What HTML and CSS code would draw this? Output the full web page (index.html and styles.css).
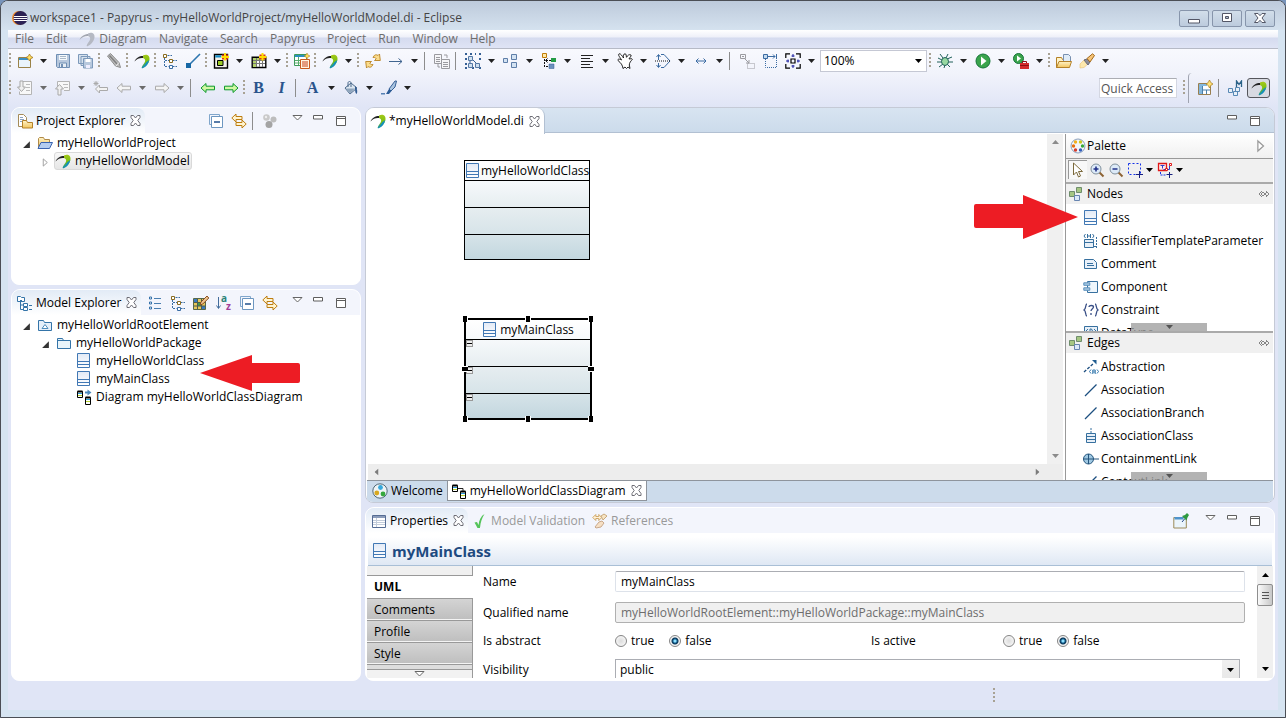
FILE: index.html
```html
<!DOCTYPE html>
<html lang="en">
<head>
<meta charset="utf-8">
<title>workspace1 - Papyrus - Eclipse</title>
<link rel="stylesheet" href="styles.css">
</head>
<body>
<svg class="defs" aria-hidden="true">
  <defs>
    <linearGradient id="g-cls" x1="0" y1="0" x2="0" y2="1"><stop offset="0" stop-color="#e2eaf6"/><stop offset="1" stop-color="#fff"/></linearGradient>
    <linearGradient id="g-pap" x1="0" y1="0" x2="0" y2="1"><stop offset="0" stop-color="#a4c81c"/><stop offset=".5" stop-color="#7cc010"/><stop offset="1" stop-color="#0a8ab8"/></linearGradient>
    <linearGradient id="g-fold" x1="0" y1="0" x2="0" y2="1"><stop offset="0" stop-color="#fff3c8"/><stop offset="1" stop-color="#f2c55e"/></linearGradient>
  </defs>
  <symbol id="arr" viewBox="0 0 7 4"><path d="M0 0h7L3.500 4z"/></symbol>
  <symbol id="eclipse" viewBox="0 0 16 16"><circle cx="7" cy="8" r="7" fill="#f08a2c"/><circle cx="8.500" cy="8" r="7" fill="#2c2255"/><path d="M2 6.500h13M1.700 8.500h13.600M2 10.500h13" stroke="#fff" stroke-width="1"/></symbol>
  <symbol id="papyrus" viewBox="0 0 16 16"><path d="M.5 8.500C2 4.500 6 2.500 10.500 3l-1 2C6 4.600 3 5.500 .5 8.500z" fill="#222"/><path d="M9 2.500c4-2 7 .5 6.500 4C15 10 12 14 8 15.500c-1-1 .5-3 2-5C11.500 8.500 12 6 9 5z" fill="url(#g-pap)"/><path d="M15.300 7c-1 4-3 6.500-6.500 8L12.500 9z" fill="#128fc0"/></symbol>
  <symbol id="papyrus-g" viewBox="0 0 16 16"><path d="M.5 9C2 5 6 2.500 11 3l-1 2C6 4.600 3 6 .5 9z" fill="#a2a6b0"/><path d="M9 2.500c4-2 7 .5 6.500 4C15 10 12 14 8 15.500c-1-1 .5-3 2-5C11.500 8.500 12 6 9 5z" fill="#b5b9c3"/></symbol>
  <symbol id="new" viewBox="0 0 16 16"><path d="M1.500 4.500h12v10h-12z" fill="#eaf4fb" stroke="#9a8248"/><path d="M2 5h9v2H2z" fill="#3b8fc6"/><path d="M12.500 1l1.200 2.300L16 4.500l-2.300 1.200L12.500 8l-1.200-2.300L9 4.500l2.300-1.200z" fill="#ffdf62" stroke="#a67a20" stroke-width=".8"/></symbol>
  <symbol id="save" viewBox="0 0 16 16"><path d="M1.500 1.500h13v13h-12l-1-1z" fill="#b7c8dd" stroke="#6f8fb4"/><path d="M4 2h8v5H4z" fill="#f5f9fc"/><path d="M5 3.500h6M5 5.500h6" stroke="#a9b8c8"/><path d="M4.500 10h7v4.500h-7z" fill="#e8eef5" stroke="#6f8fb4"/><path d="M6 11h2v3H6z" fill="#6f8fb4"/></symbol>
  <symbol id="saveall" viewBox="0 0 16 16"><g fill="#d6e1ed" stroke="#7c99ba"><path d="M.5 1.500h9v9h-9zM3 3.500h9v9H3z"/><path d="M5.500 5.500h9v9.500h-9z" fill="#b7c8dd"/></g><path d="M7.500 6h5v3h-5z" fill="#fff"/><path d="M8 12h4v3H8z" fill="#eef"/></symbol>
  <symbol id="pencil" viewBox="0 0 16 16"><path d="M1.500 3l3-2.500 8.500 9 1.500 5-5-1.500z" fill="#bcbcbc" stroke="#8c8c8c"/><path d="M3.500 2.500l7.500 8.500" stroke="#808080" stroke-width="1.500"/><path d="M10 13l3-3.500" stroke="#ececec"/></symbol>
  <symbol id="tree" viewBox="0 0 16 16"><path d="M2.500 5v8.500h4M3 7.500h4M10.500 7.500H15M10.500 13.500H15M5.500 2.500H10" fill="none" stroke="#3a6da4" stroke-dasharray="2 1"/><path d="M1.500 1.500h3v3h-3z" fill="#fff" stroke="#8a6c20"/><path d="M7.500 6.500h3v3h-3z" fill="#fff" stroke="#8a6c20"/><path d="M7.500 12.500h3v3h-3z" fill="#fff" stroke="#3a6da4"/></symbol>
  <symbol id="conn" viewBox="0 0 16 16"><path d="M5 11L15 1" stroke="#2e76b0" stroke-width="1.600"/><path d="M1 10h5v5H1z" fill="#1768a5"/></symbol>
  <symbol id="diag" viewBox="0 0 16 16"><path d="M1.500 1.500h13v13.500h-13z" fill="#f4f2ea" stroke="#000" stroke-width="1.400"/><path d="M2.200 2.200h6v2.300h-6z" fill="#168cc7"/><path d="M4.500 7.500h5.500v5H4.500z" fill="#9bcb25" stroke="#000"/><path d="M9 1.500h6v5H9z" fill="#d9371c"/><path d="M12 0v7.500M8.500 4h7.500" stroke="#ffdc00" stroke-width="2"/></symbol>
  <symbol id="table" viewBox="0 0 16 16"><path d="M1.200 4.200h13.600v10.300H1.200z" fill="#fff" stroke="#000" stroke-width="1.400"/><path d="M2 5h12v2H2zM2 7h3v7H2z" fill="#b3d16a"/><path d="M5.500 5v9M8.500 5v9M11.500 5v9M2 7.500h12M2 10.500h12" stroke="#777"/><path d="M8.500 1.500h6v5h-6z" fill="#d9371c"/><path d="M11.500 0v7.500M8 4h7.500" stroke="#ffdc00" stroke-width="2"/></symbol>
  <symbol id="table2" viewBox="0 0 16 16"><path d="M.5 1.500h12v11H.5z" fill="#fff" stroke="#3c9a5a"/><path d="M1 2h11v2H1z" fill="#2b8fc0"/><path d="M4.500 4v8M1 7.500h11M1 10h11" stroke="#5aac6c"/><path d="M6.500 6.500h9v9h-9z" fill="#fff6e4" stroke="#c85a1c"/><path d="M8 9h6M8 11h6M8 13h6" stroke="#c84018"/><path d="M13 0l1 2 2 1-2 1-1 2-1-2-2-1 2-1z" fill="#ffdc50" stroke="#a67a20" stroke-width=".5"/></symbol>
  <symbol id="sync" viewBox="0 0 16 16"><g fill="#fbdc8c" stroke="#b98220" stroke-width=".9" stroke-linejoin="round"><path d="M8 4.500C9 2 11 1 13 2.500L14.500 1l.8 6.500H9.500l1.700-1.700C10.500 4.500 9.500 4 8 4.500z"/><path d="M8 11.500C7 14 5 15 3 13.500L1.500 15l-.8-6.500h5.800l-1.700 1.700c.7 1.300 1.700 1.800 3.200 1.300z"/></g></symbol>
  <symbol id="rarr" viewBox="0 0 16 16"><path d="M1 8.500h13M10.500 5.500l3.500 3-3.500 3" fill="none" stroke="#41658f"/></symbol>
  <symbol id="copy" viewBox="0 0 16 16"><g fill="#f6f6f8" stroke="#9a9a9f"><path d="M.5 1.500h7v9h-7z"/><path d="M7.500 6.500h8v9h-8z"/><path d="M2 4.500h4M2 6.500h4M2 8.500h4M9 9.500h5M9 11.500h5M9 13.500h5M10 2h3v3M4 11v3h2" fill="none"/></g></symbol>
  <symbol id="arrange" viewBox="0 0 16 16"><path d="M0 0h2v2H0zM5 0h2v2H5zM10 0h1v2h-1zM14 0h2v2h-2zM0 5h2v2H0zM14 5h2v2h-2zM0 10h2v2H0zM14 14h2v2h-2zM0 14h2v2H0zM7 14h2v2H7z" fill="#345f94"/><path d="M6 5l6 6M5 6v5" stroke="#345f94"/><path d="M3.500 3.500h4v4h-4zM3.500 10.500h4v4h-4zM10.500 10.500h4v4h-4z" fill="#cfe0f0" stroke="#5578a4"/></symbol>
  <symbol id="align3" viewBox="0 0 16 16"><g fill="#d4e3f2" stroke="#5e7ea8"><path d="M.5 5.500h4v4h-4z"/><path d="M8.500 1.500h5v5h-5zM8.500 9.500h5v5h-5z"/></g></symbol>
  <symbol id="order" viewBox="0 0 16 16"><path d="M1.500.5h4v4h-4z" fill="#ffe9a8" stroke="#c07c08"/><path d="M3.500 6v9M5 7.500h5M5 13.500h3" stroke="#111" stroke-dasharray="2 1"/><path d="M6.500 5.500l-2 2 2 2" fill="none" stroke="#111"/><path d="M10 5h5v4h-5z" fill="#239c45"/><path d="M8 11h5v4.500H8z" fill="#6d91bd" stroke="#345f94" stroke-width=".5"/></symbol>
  <symbol id="lines" viewBox="0 0 16 16"><path d="M2 2.500h12M2 5.500h9M2 8.500h12M2 11.500h9M2 14.500h12" stroke="#222"/></symbol>
  <symbol id="ghost" viewBox="0 0 16 16"><path d="M6 15.500C5.500 12 4 10 1 7.500.5 6 2 5.500 4.500 7 3 4 .5 2 2 .8 4 .5 5 3 6.500 5 6.500 3 6 1 8 .8c1.500 0 1 2 1.500 3.500C10.500 2.500 12 1 14 2c1 1-2 3-2 4 1.500 0 3-1 3.300.5-1.300 1.500-3 3-3 5.500l.7 3.500-2-1.500-1.500 1.500L8 14z" fill="#fff" stroke="#111" stroke-width=".9"/></symbol>
  <symbol id="flip" viewBox="0 0 16 16"><path d="M3.500 2v5M1.500 4l2-2.500 2 2.500M3.500 10v4M1.500 12l2 2.500 2-2.500M6 1.500h3L15 8l-6 6.500H6" fill="none" stroke="#3b6ba2"/><path d="M0 8h15" stroke="#111" stroke-dasharray="1 1"/></symbol>
  <symbol id="lr" viewBox="0 0 16 16"><path d="M3 8h10M5.500 5.500L3 8l2.500 2.500M10.500 5.500L13 8l-2.500 2.500" fill="none" stroke="#3b6ba2"/></symbol>
  <symbol id="snap" viewBox="0 0 16 16"><g fill="none" stroke="#9b9ba0"><path d="M1.500 1.500h5v4h-5zM3 3.500h2"/><path d="M8.500 10.500h7v5h-7z" stroke-dasharray="1 1"/><path d="M6 6l4 4M10 7v3H7"/></g></symbol>
  <symbol id="size" viewBox="0 0 16 16"><path d="M3.500 6v8.500h11V6" fill="none" stroke="#3b6ba2" stroke-dasharray="1 1"/><path d="M1.500 1.500h4v4h-4z" fill="#c5dbef" stroke="#3b6ba2"/><path d="M6 3.500h7M11 1.500l2 2-2 2M14.500 1v5" stroke="#3b6ba2" fill="none"/></symbol>
  <symbol id="fit" viewBox="0 0 16 16"><path d="M.8 5V.8H5M11 .8h4.200V5M15.200 11v4.200H11M5 15.200H.8V11" fill="none" stroke="#000" stroke-width="1.200"/><path d="M6 6h4v4H6z" fill="none" stroke="#000" stroke-width="1.200"/><path d="M8 1v3M6.500 3h3M8 12v3M6.500 13h3M1 8h3M3 6.500v3M12 8h3M13 6.500v3" stroke="#1a1f9e"/></symbol>
  <symbol id="bug" viewBox="0 0 16 16"><path d="M3 1l3 4M11 1L9 5M1 5l4 2M15 4l-5 2M0 9h5M11 9h5M2 14l4-3M7 15l1-3M13 14l-3-3" stroke="#21615b"/><ellipse cx="8" cy="8.500" rx="3.500" ry="4" fill="#97d8a1" stroke="#21615b"/></symbol>
  <symbol id="run" viewBox="0 0 16 16"><circle cx="8" cy="8" r="7" fill="#3aa44c" stroke="#17753a"/><path d="M6 3.500L11.500 8 6 12.500z" fill="#fff"/></symbol>
  <symbol id="runext" viewBox="0 0 16 16"><circle cx="5.500" cy="5.500" r="5" fill="#3aa44c" stroke="#17753a"/><path d="M4 2.500L8 5.500 4 8.500z" fill="#fff"/><path d="M7 10h9v6H7z" fill="#d42b2b"/><path d="M9.500 10V8.500h4V10M7 12.500h9" fill="none" stroke="#8e1010"/></symbol>
  <symbol id="openf" viewBox="0 0 16 16"><path d="M.5 4.500h5l1 2h6v8H.5z" fill="#fff3c8" stroke="#b48128"/><path d="M7.500 1.500h5l2 2v5h-7z" fill="#e0ecf8" stroke="#7890b0"/><path d="M3 8.500h12.500l-2 6H.5z" fill="url(#g-fold)" stroke="#b48128"/></symbol>
  <symbol id="torch" viewBox="0 0 16 16"><path d="M1 11l5-5 4 4-5 4.500-4 .5z" fill="#fde8ad" stroke="#e8c070" stroke-width=".6"/><path d="M5 7l3-1 3 3-2 3z" fill="#8c8c96" stroke="#696978"/><path d="M8 5.500L13.500.8l2 1.700L11 9z" fill="#f6c478" stroke="#a26818"/></symbol>
  <symbol id="stepin" viewBox="0 0 16 16"><path d="M5.500 1.500h9v13h-12v-3" fill="#f8f8f8" stroke="#b4b4b4"/><path d="M9 4.500h4M9 7.500h4M9 10.500h4" stroke="#bbb"/><path d="M3 1h3v6h2.500L4.500 11.500.5 7H3z" fill="#f0f0f0" stroke="#a8a8a8"/></symbol>
  <symbol id="stepout" viewBox="0 0 16 16"><path d="M2.500 8V1.500h12v9H9" fill="#f8f8f8" stroke="#b4b4b4"/><path d="M8 4.500h5M9 7.500h4" stroke="#bbb"/><path d="M3 15h3V9h2.500L4.500 4.500.5 9H3z" fill="#f0f0f0" stroke="#a8a8a8"/></symbol>
  <symbol id="lstar" viewBox="0 0 16 16"><path d="M2.500 9l4-4v2.500h8v3h-8V13z" fill="#f3f3f3" stroke="#aaa"/><path d="M3 1v5M.5 3.500h5M1.200 1.700l3.600 3.600M4.800 1.700L1.200 5.300" stroke="#aaa"/></symbol>
  <symbol id="left" viewBox="0 0 16 16"><path d="M1 8l5-4.500v2.700h8.500v3.600H6v2.700z"/></symbol>
  <symbol id="right" viewBox="0 0 16 16"><path d="M15 8l-5-4.500v2.700H1.500v3.600H10v2.700z"/></symbol>
  <symbol id="bucket" viewBox="0 0 16 16"><path d="M2 8l6-5 6 5-7 6z" fill="#dce6f0" stroke="#4c6a8c"/><path d="M3 8.500h9l-5 5z" fill="#90a6bd"/><path d="M5 7V3c0-2 3-2 3 0v4" fill="none" stroke="#4c6a8c"/><path d="M12 6c2 2 3 6 1.500 8-1.500-1-1.500-4-1.500-8z" fill="#325c92"/></symbol>
  <symbol id="brush" viewBox="0 0 16 16"><path d="M8 9l6-8h1.500L14 7l-4 4z" fill="#aac4e0" stroke="#365f94"/><path d="M5 14l3-5 2.500 2L8 14z" fill="#2b5b96"/><path d="M0 13h4v1.500H0z" fill="#5580b4"/></symbol>
  <symbol id="persp" viewBox="0 0 16 16"><path d="M1.500 3.500h12v11h-12z" fill="#fff" stroke="#997f50"/><path d="M2 4h8v2H2zM2 6h3v8H2z" fill="#83b8df"/><path d="M5.500 6v8M5 10h8M9.500 10v4" stroke="#4c80aa"/><path d="M12.500 0l1.300 2.600L16 4l-2.200 1.400-1.300 2.600-1.300-2.600L9 4l2.200-1.400z" fill="#ffe177" stroke="#a67a20" stroke-width=".7"/></symbol>
  <symbol id="modelp" viewBox="0 0 16 16"><path d="M.5 8.500h4v4h-4zM5.500 11.500h4v4h-4zM7.500 7.500h4v4h-4z" fill="#e8f0f8" stroke="#5788b4"/><path d="M8.500 7V1l2.500 3.500L13.500 1v6" fill="none" stroke="#2c6389" stroke-width="1.300"/></symbol>
  <symbol id="projexp" viewBox="0 0 16 16"><path d="M1.500 1.500h5l3 3v9h-8z" fill="#fff" stroke="#a58c58"/><path d="M3 4.500h3M3 6.500h4M3 8.500h3" stroke="#88a2c2"/><path d="M5.500 7.500h4l1 2h5v5.500h-10z" fill="url(#g-fold)" stroke="#b48128"/></symbol>
  <symbol id="modelexp" viewBox="0 0 16 16"><path d="M.5 1.500h3l1 1h3v4h-7zM3.500 7v7.500H6M3.500 10h3" fill="#fff" stroke="#3474a8"/><path d="M6.500 8.500h4v3h-4zM6.500 12.500h4v3h-4z" fill="#fff" stroke="#3474a8"/><path d="M12 10.500h3M12 14.500h3M3 5.500h2" stroke="#3474a8"/></symbol>
  <symbol id="close" viewBox="0 0 11 11"><path d="M1 .5h2.500l2 2.500 2-2.500H10v2L7.800 5.500 10 8.500v2H7.500L5.500 8l-2 2.500H1v-2l2.200-3L1 2.500z" fill="#fff" stroke="#6e6e76"/></symbol>
  <symbol id="collapse" viewBox="0 0 16 16"><path d="M1.500 11.500v-10h10v2M1.500 11.500h2" fill="none" stroke="#80a6cb"/><path d="M3.500 3.500h11v11h-11z" fill="#fff" stroke="#6c96c0"/><path d="M6 9h6" stroke="#20508c" stroke-width="1.400"/></symbol>
  <symbol id="link" viewBox="0 0 16 16"><path d="M.8 5L5 1v2.500h6v3H5V9z" fill="#fff4d0" stroke="#bd7d10"/><path d="M15.200 11L11 7v2.500H5v3h6V15z" fill="#fff4d0" stroke="#bd7d10"/></symbol>
  <symbol id="dots" viewBox="0 0 16 16"><circle cx="4.500" cy="4.500" r="3.300" fill="#c9c9c9"/><circle cx="11.500" cy="6.500" r="3" fill="#bdbdbd"/><circle cx="7" cy="11.500" r="3.500" fill="#a4a4a4"/><circle cx="4" cy="4" r="1.200" fill="#eee"/></symbol>
  <symbol id="vmenu" viewBox="0 0 11 6"><path d="M1 .5h9L5.500 5z" fill="#fff" stroke="#666"/></symbol>
  <symbol id="min" viewBox="0 0 10 5"><path d="M.5.5h9v3.500h-9z" fill="#fff" stroke="#5e5e5e"/></symbol>
  <symbol id="max" viewBox="0 0 10 10"><path d="M.5.5h9v9h-9z" fill="#fff" stroke="#5e5e5e"/><path d="M1 2.500h8" stroke="#5e5e5e"/></symbol>
  <symbol id="folder" viewBox="0 0 16 16"><path d="M1.500 12V3.500l1-1h4l1 2h5v3" fill="url(#g-fold)" stroke="#b08a48"/><path d="M1 13.500l3-6h11.500l-3 6z" fill="#b4cdf0" stroke="#3a64b0"/></symbol>
  <symbol id="root" viewBox="0 0 16 16"><path d="M1.500 13.500V3.500h5l1 2h7v8z" fill="#e4effa" stroke="#3474a8"/><path d="M5 11.500L8 7.500l3 4z" fill="#fff" stroke="#4c8cbd"/></symbol>
  <symbol id="pkg" viewBox="0 0 16 16"><path d="M1.500 13.500V3.500h5l1 2h7v8zM2 5.500h6" fill="#e8f4fa" stroke="#3474a8"/></symbol>
  <symbol id="cls" viewBox="0 0 16 16"><path d="M1.500.5h12v14h-12z" fill="url(#g-cls)" stroke="#4178b4"/><path d="M2 8.500h11M2 11.500h11" stroke="#4178b4"/></symbol>
  <symbol id="cdiag" viewBox="0 0 16 16"><path d="M1.500 2.500h5v6h-5zM9.500 8.500h5v7h-5z" fill="#fff" stroke="#000"/><path d="M1.500 2.500h5M9.500 8.500h5" stroke="#000" stroke-width="2"/><path d="M2 4.500h4M10 10.500h4" stroke="#2a9ad0"/><path d="M2 6.500h4M10 12.500h4" stroke="#b5cf30"/><path d="M7 5.500h5v2.500" stroke="#222" fill="none"/></symbol>
  <symbol id="cdiag-a" viewBox="0 0 16 16"><path d="M1.500 2.500h5v6h-5zM9.500 8.500h5v7h-5z" fill="#fff" stroke="#000"/><path d="M1.500 2.500h5M9.500 8.500h5" stroke="#000" stroke-width="2"/><path d="M2 4.500h4M10 10.500h4" stroke="#2a9ad0"/><path d="M2 6.500h4M10 12.500h4" stroke="#b5cf30"/><path d="M9 2.500h2.500V.5L15.500 3.500l-4 3V4.500H9z" fill="#4b89bd"/></symbol>
  <symbol id="list" viewBox="0 0 16 16"><path d="M2.500 2h2v2h-2zM2.500 7h2v2h-2zM2.500 12h2v2h-2z" fill="#fff" stroke="#3672aa"/><path d="M7 3.500h7M7 8.500h7M7 13.500h7" stroke="#4a7eb0"/></symbol>
  <symbol id="custom" viewBox="0 0 16 16"><path d="M.5 3.500h12v11H.5z" fill="#e7c85a" stroke="#586848"/><path d="M1 4h4v3H1zM8 11h4v3H8z" fill="#397bc0"/><path d="M5 7h3v4H5z" fill="#3f9c50"/><path d="M4.500 4v10M8.500 4v10M1 7.500h11M1 11h11" stroke="#4c5c50"/><path d="M7 10l1-3 6-6 1.800 2-6 6z" fill="#ecc38f" stroke="#8c4f20"/></symbol>
  <symbol id="palette" viewBox="0 0 16 16"><circle cx="8" cy="8" r="7" fill="#f4f6fa" stroke="#8aa0bb"/><circle cx="5.500" cy="4" r="1.700" fill="#f2b01e"/><circle cx="10.500" cy="4" r="1.700" fill="#c8c81e"/><circle cx="3.500" cy="8" r="1.700" fill="#e87010"/><circle cx="12.500" cy="8" r="1.700" fill="#36a83c"/><circle cx="5.500" cy="12" r="1.700" fill="#d43c2c"/><circle cx="10.500" cy="12" r="1.700" fill="#2f5cbc"/></symbol>
  <symbol id="welcome" viewBox="0 0 16 16"><circle cx="8" cy="8" r="7.200" fill="#eef4f6" stroke="#506878"/><circle cx="8.500" cy="4.500" r="2.400" fill="#36a8dc"/><circle cx="4.800" cy="10" r="2.400" fill="#d8a820"/><circle cx="11" cy="11" r="2.400" fill="#35a83c"/></symbol>
  <symbol id="cursor" viewBox="0 0 16 16"><path d="M3.500 1v12l3-3 2 5 2-1-2-4.500h4z" fill="#fff" stroke="#7c6a3c"/></symbol>
  <symbol id="zin" viewBox="0 0 16 16"><path d="M10 10l4.500 4.500" stroke="#8d6333" stroke-width="2"/><circle cx="7" cy="7" r="5" fill="#dceaf8" stroke="#80909c"/><path d="M4.500 7h5M7 4.500v5" stroke="#203088" stroke-width="1.600"/></symbol>
  <symbol id="zout" viewBox="0 0 16 16"><path d="M10 10l4.500 4.500" stroke="#8d6333" stroke-width="2"/><circle cx="7" cy="7" r="5" fill="#dceaf8" stroke="#80909c"/><path d="M4.500 7h5" stroke="#203088" stroke-width="1.600"/></symbol>
  <symbol id="marq" viewBox="0 0 16 16"><path d="M1.500 1.500h12v11h-12z" fill="none" stroke="#1230e8" stroke-dasharray="2 2"/><path d="M12.500 9v7M9 12.500h7" stroke="#182080"/></symbol>
  <symbol id="group" viewBox="0 0 16 16"><path d="M1.500 1.500h8v7h-8z" fill="#ffe8e8" stroke="#e01818" stroke-width="1.300"/><path d="M3.500 3.500h4M5.500 3.500v3M6.500 7.500h6v-4" fill="none" stroke="#3040c8"/><path d="M8.500 6.500h2v2h-2zM12.500 1.500h2v2h-2z" fill="#fff" stroke="#e01818"/><path d="M3.500 10v3h5" fill="none" stroke="#1230e8" stroke-dasharray="2 1"/><path d="M12.500 10v6M9.500 12.500h6" stroke="#182080"/></symbol>
  <symbol id="cubes" viewBox="0 0 16 16"><path d="M1.500 5.500h5v5h-5zM8.500 1.500h5v5h-5z" fill="#a5c682" stroke="#6f8d6c"/><path d="M6.500 9.500h5v5h-5z" fill="#dce9f8" stroke="#6784b0"/></symbol>
  <symbol id="pin" viewBox="0 0 12 8"><path d="M4 1L1 4l3 3M8 1l3 3-3 3M3 4l2-2 2 2 2-2M3 4l2 2 2-2 2 2" fill="none" stroke="#777" stroke-width=".9"/></symbol>
  <symbol id="ctp" viewBox="0 0 16 16"><path d="M1.500 6.500h9v8h-9zM2 9.500h8" fill="#e8f0f8" stroke="#37709f"/><path d="M2.500 1l-1.500 2L2.500 5M9.500 1l1.500 2L9.500 5M4.500 1v4M7.500 1v4M4.500 3h3" fill="none" stroke="#37709f"/><path d="M13.500 4v11M11 13.500h3" fill="none" stroke="#37709f" stroke-dasharray="2 1"/></symbol>
  <symbol id="comment" viewBox="0 0 16 16"><path d="M1.500 3.500h9l3 3v6h-12z" fill="#e9f1fa" stroke="#37709f"/><path d="M4 7.500h6M4 9.500h7" stroke="#37709f"/></symbol>
  <symbol id="component" viewBox="0 0 16 16"><path d="M4.500 2.500h10v11h-10z" fill="#eef6fc" stroke="#37709f"/><path d="M.8 3.800h6v2.500h-6zM.8 8.800h6v2.500h-6z" fill="#a8c8e2" stroke="#5c91bd"/></symbol>
  <symbol id="constraint" viewBox="0 0 16 16"><path d="M4 2C2 2 3.500 7 1 8c2.500 1 1 6 3 6M12 2c2 0 .5 5 3 6-2.500 1-1 6-3 6M6 5c0-2 4.500-2 4.500 0 0 1.500-2.500 2-2.500 4M8 11v2" fill="none" stroke="#394f86" stroke-width="1.300"/></symbol>
  <symbol id="dtype" viewBox="0 0 16 16"><path d="M1.500 1.500h13v13h-13z" fill="#e8f0f8" stroke="#37709f"/><path d="M5 4L3 6l2 2M11 4l2 2-2 2M7 4h1.500l1 2-1 2H7z" fill="none" stroke="#37709f"/></symbol>
  <symbol id="abstr" viewBox="0 0 16 16"><path d="M1 13L11 4" stroke="#1d4e80" stroke-dasharray="3 1.500" stroke-width="1.300"/><path d="M9 1h4.500v4.500z" fill="#1f5c90"/><path d="M8 10.500l-1.500 2 1.500 2M14 10.500l1.500 2-1.500 2M9.800 15v-4h2.400v4M9.800 13h2.400" fill="none" stroke="#1d6aa5" stroke-width=".9"/></symbol>
  <symbol id="line" viewBox="0 0 16 16"><path d="M2 14L13.500 2.500" stroke="#1c4f80" stroke-width="1.300"/></symbol>
  <symbol id="acls" viewBox="0 0 16 16"><path d="M8 0v5" stroke="#37709f" stroke-dasharray="2 1"/><path d="M3.500 5.500h9v9h-9zM4 8.500h8M4 11.500h8" fill="#e8f0f8" stroke="#37709f"/></symbol>
  <symbol id="contain" viewBox="0 0 16 16"><path d="M10 8h6" stroke="#24557d"/><circle cx="5.500" cy="8" r="5" fill="#9fc8e2" stroke="#24557d"/><path d="M5.500 3v10M.5 8h10" stroke="#24557d"/></symbol>
  <symbol id="props" viewBox="0 0 16 16"><path d="M1.500 2.500h13v12h-13z" fill="#fff" stroke="#556c94"/><path d="M2 3h12v2H2z" fill="#8a9cba"/><path d="M5.500 5v9M2 7.500h12M2 9.500h12M2 11.500h12" stroke="#c2ccda"/></symbol>
  <symbol id="check" viewBox="0 0 16 16"><path d="M2.500 9.500L5 9l1.500 3C7 7 9 3 12.500 1 10 5 8.500 9 8 15H5.500z" fill="#55c45a"/></symbol>
  <symbol id="refs" viewBox="0 0 16 16"><path d="M.8 4.500l3-3v2h3v-2l3 3-3 3v-2h-3v2z" fill="#fff1d6" stroke="#d0a868"/><path d="M9 3l3-2 3 2-4 4z" fill="#f6e4c4" stroke="#c9a97c"/><path d="M3 14l4-5 3-1 2 2-3 4-5 1z" fill="#f6dfc4" stroke="#c9a98c"/></symbol>
  <symbol id="pinview" viewBox="0 0 16 16"><path d="M.8 4.500h12.500v10.500H.8z" fill="#eaf4fb" stroke="#9c8a58"/><path d="M1.500 4h9v2.500h-9z" fill="#4e93cc"/><path d="M9 9l3-3.500" stroke="#27488a"/><path d="M9 3l3-1 2-2 2 2-1.500 2.500-1 3z" fill="#2e9a40"/></symbol>
  <symbol id="open" viewBox="0 0 8 8"><path d="M7 1v6H1z" fill="#333"/></symbol>
  <symbol id="shut" viewBox="0 0 8 10"><path d="M1.500 1v8L6 5z" fill="#fff" stroke="#9a9a9a"/></symbol>
  <symbol id="w-min" viewBox="0 0 14 12"><path d="M1.500 7.500h11v3.500h-11z" fill="#fff" stroke="#535666"/></symbol>
  <symbol id="w-max" viewBox="0 0 14 12"><path d="M2.500 1.500h9v8h-9z" fill="#fff" stroke="#535666"/><path d="M5.500 4.500h3v2h-3z" fill="#aab8ca" stroke="#535666"/></symbol>
  <symbol id="w-close" viewBox="0 0 14 12"><path d="M1.500 1.500h3.500l2 2.200 2-2.200h3.500L9 6l3.500 4.500H9L7 8.300l-2 2.200H1.500L5 6z" fill="#fff" stroke="#535666"/></symbol>
</svg>

<div class="window">
  <header class="titlebar">
    <svg class="ic"><use href="#eclipse"/></svg>
    <h1>workspace1 - Papyrus - myHelloWorldProject/myHelloWorldModel.di - Eclipse</h1>
    <div class="winctl">
      <button aria-label="Minimize"><svg><use href="#w-min"/></svg></button>
      <button aria-label="Restore"><svg><use href="#w-max"/></svg></button>
      <button aria-label="Close"><svg><use href="#w-close"/></svg></button>
    </div>
  </header>

  <div class="client">
    <nav class="menubar">
      <button>File</button><button>Edit</button><button class="with-ic"><svg class="ic"><use href="#papyrus-g"/></svg>Diagram</button><button>Navigate</button><button>Search</button><button>Papyrus</button><button>Project</button><button>Run</button><button>Window</button><button>Help</button>
    </nav>

    <div class="toolbar">
      <i class="grip"></i>
      <button class="tb" aria-label="New"><svg class="ic"><use href="#new"/></svg></button><button class="dd" aria-label="New menu"><svg><use href="#arr"/></svg></button>
      <button class="tb" aria-label="Save"><svg class="ic"><use href="#save"/></svg></button>
      <button class="tb" aria-label="Save all"><svg class="ic"><use href="#saveall"/></svg></button>
      <i class="grip"></i>
      <button class="tb" aria-label="Edit"><svg class="ic"><use href="#pencil"/></svg></button>
      <i class="grip"></i>
      <button class="tb" aria-label="Papyrus"><svg class="ic"><use href="#papyrus"/></svg></button>
      <i class="grip"></i>
      <button class="tb" aria-label="Tree"><svg class="ic"><use href="#tree"/></svg></button>
      <button class="tb" aria-label="Connector"><svg class="ic"><use href="#conn"/></svg></button>
      <i class="grip"></i>
      <button class="tb" aria-label="New diagram"><svg class="ic"><use href="#diag"/></svg></button><button class="dd" aria-label="Diagram menu"><svg><use href="#arr"/></svg></button>
      <button class="tb" aria-label="New table"><svg class="ic"><use href="#table"/></svg></button><button class="dd" aria-label="Table menu"><svg><use href="#arr"/></svg></button>
      <i class="grip"></i>
      <button class="tb" aria-label="Table document"><svg class="ic"><use href="#table2"/></svg></button>
      <i class="grip"></i>
      <button class="tb" aria-label="Papyrus model"><svg class="ic"><use href="#papyrus"/></svg></button><button class="dd" aria-label="Model menu"><svg><use href="#arr"/></svg></button>
      <i class="grip"></i>
      <button class="tb" aria-label="Synchronize"><svg class="ic"><use href="#sync"/></svg></button>
      <button class="tb" aria-label="Line style"><svg class="ic"><use href="#rarr"/></svg></button><button class="dd" aria-label="Line menu"><svg><use href="#arr"/></svg></button>
      <i class="sep"></i>
      <button class="tb" aria-label="Copy appearance"><svg class="ic"><use href="#copy"/></svg></button>
      <i class="sep"></i>
      <button class="tb" aria-label="Arrange"><svg class="ic"><use href="#arrange"/></svg></button><button class="dd" aria-label="Arrange menu"><svg><use href="#arr"/></svg></button>
      <button class="tb" aria-label="Align"><svg class="ic"><use href="#align3"/></svg></button><button class="dd" aria-label="Align menu"><svg><use href="#arr"/></svg></button>
      <button class="tb" aria-label="Order"><svg class="ic"><use href="#order"/></svg></button><button class="dd" aria-label="Order menu"><svg><use href="#arr"/></svg></button>
      <button class="tb" aria-label="Text align"><svg class="ic"><use href="#lines"/></svg></button><button class="dd" aria-label="Text menu"><svg><use href="#arr"/></svg></button>
      <button class="tb" aria-label="Show hide"><svg class="ic"><use href="#ghost"/></svg></button><button class="dd" aria-label="Show menu"><svg><use href="#arr"/></svg></button>
      <button class="tb" aria-label="Flip"><svg class="ic"><use href="#flip"/></svg></button><button class="dd" aria-label="Flip menu"><svg><use href="#arr"/></svg></button>
      <button class="tb" aria-label="Distribute"><svg class="ic"><use href="#lr"/></svg></button><button class="dd" aria-label="Distribute menu"><svg><use href="#arr"/></svg></button>
      <i class="sep"></i>
      <button class="tb" aria-label="Snap"><svg class="ic"><use href="#snap"/></svg></button>
      <button class="tb" aria-label="Match size"><svg class="ic"><use href="#size"/></svg></button>
      <button class="tb" aria-label="Auto size"><svg class="ic"><use href="#fit"/></svg></button><button class="dd" aria-label="Size menu"><svg><use href="#arr"/></svg></button>
      <span class="zoom"><select aria-label="Zoom"><option>100%</option></select><svg><use href="#arr"/></svg></span>
      <i class="grip"></i>
      <button class="tb" aria-label="Debug"><svg class="ic"><use href="#bug"/></svg></button><button class="dd" aria-label="Debug menu"><svg><use href="#arr"/></svg></button>
      <button class="tb" aria-label="Run"><svg class="ic"><use href="#run"/></svg></button><button class="dd" aria-label="Run menu"><svg><use href="#arr"/></svg></button>
      <button class="tb" aria-label="External tools"><svg class="ic"><use href="#runext"/></svg></button><button class="dd" aria-label="Tools menu"><svg><use href="#arr"/></svg></button>
      <i class="grip"></i>
      <button class="tb" aria-label="Open"><svg class="ic"><use href="#openf"/></svg></button>
      <button class="tb" aria-label="Search"><svg class="ic"><use href="#torch"/></svg></button><button class="dd" aria-label="Search menu"><svg><use href="#arr"/></svg></button>
    </div>

    <div class="toolbar second">
      <i class="grip"></i>
      <button class="tb" aria-label="Next"><svg class="ic"><use href="#stepin"/></svg></button><button class="dd off" aria-label="Next menu"><svg><use href="#arr"/></svg></button>
      <button class="tb" aria-label="Previous"><svg class="ic"><use href="#stepout"/></svg></button><button class="dd off" aria-label="Previous menu"><svg><use href="#arr"/></svg></button>
      <button class="tb" aria-label="Last edit"><svg class="ic"><use href="#lstar"/></svg></button>
      <button class="tb grey" aria-label="Back"><svg class="ic"><use href="#left"/></svg></button><button class="dd off" aria-label="Back menu"><svg><use href="#arr"/></svg></button>
      <button class="tb grey" aria-label="Forward"><svg class="ic"><use href="#right"/></svg></button><button class="dd off" aria-label="Forward menu"><svg><use href="#arr"/></svg></button>
      <i class="sep"></i>
      <button class="tb green" aria-label="Navigate back"><svg class="ic"><use href="#left"/></svg></button>
      <button class="tb green" aria-label="Navigate forward"><svg class="ic"><use href="#right"/></svg></button>
      <i class="grip"></i>
      <button class="tb letter">B</button>
      <button class="tb letter ital">I</button>
      <i class="sep"></i>
      <button class="tb letter">A</button><button class="dd" aria-label="Font menu"><svg><use href="#arr"/></svg></button>
      <button class="tb" aria-label="Fill"><svg class="ic"><use href="#bucket"/></svg></button><button class="dd" aria-label="Fill menu"><svg><use href="#arr"/></svg></button>
      <button class="tb" aria-label="Line colour"><svg class="ic"><use href="#brush"/></svg></button><button class="dd" aria-label="Line colour menu"><svg><use href="#arr"/></svg></button>
      <div class="persp">
        <input class="quick" type="text" value="Quick Access" aria-label="Quick Access">
        <i class="grip"></i>
        <div class="switcher">
          <button class="tb" aria-label="Open perspective"><svg class="ic"><use href="#persp"/></svg></button>
          <i class="sep"></i>
          <button class="tb" aria-label="Modeling"><svg class="ic"><use href="#modelp"/></svg></button>
          <button class="tb pressed" aria-label="Papyrus"><svg class="ic"><use href="#papyrus"/></svg></button>
        </div>
      </div>
    </div>

    <main class="workbench">
      <div class="side">
        <section class="view explorer">
          <div class="tabs">
            <div class="tab"><svg class="ic"><use href="#projexp"/></svg><span>Project Explorer</span><button class="x" aria-label="Close"><svg><use href="#close"/></svg></button></div>
            <div class="tools">
              <button class="tb" aria-label="Collapse all"><svg class="ic"><use href="#collapse"/></svg></button>
              <button class="tb" aria-label="Link with editor"><svg class="ic"><use href="#link"/></svg></button>
              <i class="sep"></i>
              <button class="tb" aria-label="Focus"><svg class="ic"><use href="#dots"/></svg></button>
            </div>
            <div class="ctl"><button aria-label="View menu"><svg class="vm"><use href="#vmenu"/></svg></button><button aria-label="Minimize"><svg class="mi"><use href="#min"/></svg></button><button aria-label="Maximize"><svg class="ma"><use href="#max"/></svg></button></div>
          </div>
          <ul class="tree">
            <li><svg class="tw"><use href="#open"/></svg><span class="node"><svg class="ic"><use href="#folder"/></svg>myHelloWorldProject</span></li>
            <li class="l1"><svg class="tw"><use href="#shut"/></svg><span class="node sel"><svg class="ic"><use href="#papyrus"/></svg>myHelloWorldModel</span></li>
          </ul>
        </section>

        <section class="view models">
          <div class="tabs">
            <div class="tab"><svg class="ic"><use href="#modelexp"/></svg><span>Model Explorer</span><button class="x" aria-label="Close"><svg><use href="#close"/></svg></button></div>
            <div class="tools">
              <button class="tb" aria-label="List"><svg class="ic"><use href="#list"/></svg></button>
              <button class="tb" aria-label="Tree"><svg class="ic"><use href="#tree"/></svg></button>
              <button class="tb" aria-label="Customize"><svg class="ic"><use href="#custom"/></svg></button>
              <button class="tb" aria-label="Sort"><svg class="ic" viewBox="0 0 16 16"><path d="M2.500 2v11M.5 10.500l2 3 2-3" fill="none" stroke="#426c9c"/><text x="5" y="7" class="sort-a">a</text><text x="10" y="15" class="sort-z">z</text></svg></button>
              <button class="tb" aria-label="Collapse all"><svg class="ic"><use href="#collapse"/></svg></button>
              <button class="tb" aria-label="Link with editor"><svg class="ic"><use href="#link"/></svg></button>
            </div>
            <div class="ctl"><button aria-label="View menu"><svg class="vm"><use href="#vmenu"/></svg></button><button aria-label="Minimize"><svg class="mi"><use href="#min"/></svg></button><button aria-label="Maximize"><svg class="ma"><use href="#max"/></svg></button></div>
          </div>
          <ul class="tree">
            <li><svg class="tw"><use href="#open"/></svg><span class="node"><svg class="ic"><use href="#root"/></svg>myHelloWorldRootElement</span></li>
            <li class="l1"><svg class="tw"><use href="#open"/></svg><span class="node"><svg class="ic"><use href="#pkg"/></svg>myHelloWorldPackage</span></li>
            <li class="l2"><span class="node"><svg class="ic"><use href="#cls"/></svg>myHelloWorldClass</span></li>
            <li class="l2"><span class="node"><svg class="ic"><use href="#cls"/></svg>myMainClass</span></li>
            <li class="l2"><span class="node"><svg class="ic"><use href="#cdiag-a"/></svg>Diagram myHelloWorldClassDiagram</span></li>
          </ul>
          <svg class="callout left" viewBox="0 0 100 36"><path d="M0 18L52 0v8h46q2 0 2 2v16q0 2-2 2H52v8z"/></svg>
        </section>
      </div>

      <div class="center">
        <section class="view editor">
          <div class="tabs">
            <div class="tab"><svg class="ic"><use href="#papyrus"/></svg><span>*myHelloWorldModel.di</span><button class="x" aria-label="Close"><svg><use href="#close"/></svg></button></div>
            <div class="ctl"><button aria-label="Minimize"><svg class="mi"><use href="#min"/></svg></button><button aria-label="Maximize"><svg class="ma"><use href="#max"/></svg></button></div>
          </div>
          <div class="edit-body">
            <div class="canvas">
              <div class="uml hello">
                <div class="uml-name"><svg class="ic"><use href="#cls"/></svg>myHelloWorldClass</div>
                <div class="comp"></div><div class="comp"></div><div class="comp"></div>
              </div>
              <div class="uml main">
                <div class="uml-name"><svg class="ic"><use href="#cls"/></svg>myMainClass</div>
                <div class="comp"><i></i></div><div class="comp"><i></i></div><div class="comp"><i></i></div>
                <b class="h nw"></b><b class="h n"></b><b class="h ne"></b><b class="h w"></b><b class="h e"></b><b class="h sw"></b><b class="h s"></b><b class="h se"></b>
              </div>
            </div>
            <div class="vbar"><button class="up" aria-label="Scroll up"><svg><use href="#arr"/></svg></button><button aria-label="Scroll down"><svg><use href="#arr"/></svg></button></div>
            <div class="hbar"><button class="lt" aria-label="Scroll left"><svg><use href="#arr"/></svg></button><button class="rt" aria-label="Scroll right"><svg><use href="#arr"/></svg></button></div>
            <aside class="palette">
              <div class="pal-head"><svg class="ic"><use href="#palette"/></svg><span>Palette</span><svg class="tri"><use href="#shut"/></svg></div>
              <div class="pal-tools">
                <button class="on" aria-label="Select"><svg class="ic"><use href="#cursor"/></svg></button><button aria-label="Zoom in"><svg class="ic"><use href="#zin"/></svg></button><button aria-label="Zoom out"><svg class="ic"><use href="#zout"/></svg></button><button aria-label="Marquee"><svg class="ic"><use href="#marq"/></svg></button><button class="pd" aria-label="Marquee menu"><svg><use href="#arr"/></svg></button><button aria-label="Group"><svg class="ic"><use href="#group"/></svg></button><button class="pd" aria-label="Group menu"><svg><use href="#arr"/></svg></button>
              </div>
              <div class="drawer">
                <h2><svg class="ic"><use href="#cubes"/></svg><span>Nodes</span><svg class="pn"><use href="#pin"/></svg></h2>
                <ul>
                  <li><svg class="ic"><use href="#cls"/></svg>Class</li>
                  <li><svg class="ic"><use href="#ctp"/></svg>ClassifierTemplateParameter</li>
                  <li><svg class="ic"><use href="#comment"/></svg>Comment</li>
                  <li><svg class="ic"><use href="#component"/></svg>Component</li>
                  <li><svg class="ic"><use href="#constraint"/></svg>Constraint</li>
                  <li><svg class="ic"><use href="#dtype"/></svg>DataType</li>
                </ul>
                <button class="more" aria-label="More nodes"><svg><use href="#arr"/></svg></button>
              </div>
              <div class="drawer">
                <h2><svg class="ic"><use href="#cubes"/></svg><span>Edges</span><svg class="pn"><use href="#pin"/></svg></h2>
                <ul>
                  <li><svg class="ic"><use href="#abstr"/></svg>Abstraction</li>
                  <li><svg class="ic"><use href="#line"/></svg>Association</li>
                  <li><svg class="ic"><use href="#line"/></svg>AssociationBranch</li>
                  <li><svg class="ic"><use href="#acls"/></svg>AssociationClass</li>
                  <li><svg class="ic"><use href="#contain"/></svg>ContainmentLink</li>
                  <li><svg class="ic"><use href="#line"/></svg>ContextLink</li>
                </ul>
                <button class="more" aria-label="More edges"><svg><use href="#arr"/></svg></button>
              </div>
              <svg class="callout right" viewBox="0 0 104 44"><path d="M104 22L49 0v9H2q-2 0-2 2v20q0 2 2 2h47v11z"/></svg>
            </aside>
          </div>
          <div class="pages">
            <button class="page"><svg class="ic"><use href="#welcome"/></svg>Welcome</button>
            <div class="page current"><svg class="ic"><use href="#cdiag"/></svg>myHelloWorldClassDiagram<button class="x" aria-label="Close"><svg><use href="#close"/></svg></button></div>
          </div>
        </section>

        <section class="view props">
          <div class="tabs">
            <div class="tab"><svg class="ic"><use href="#props"/></svg><span>Properties</span><button class="x" aria-label="Close"><svg><use href="#close"/></svg></button></div>
            <div class="tab idle"><svg class="ic"><use href="#check"/></svg><span>Model Validation</span></div>
            <div class="tab idle"><svg class="ic"><use href="#refs"/></svg><span>References</span></div>
            <div class="tools"><button class="tb" aria-label="Pin"><svg class="ic"><use href="#pinview"/></svg></button></div>
            <div class="ctl"><button aria-label="View menu"><svg class="vm"><use href="#vmenu"/></svg></button><button aria-label="Minimize"><svg class="mi"><use href="#min"/></svg></button><button aria-label="Maximize"><svg class="ma"><use href="#max"/></svg></button></div>
          </div>
          <h2 class="prop-title"><svg class="ic"><use href="#cls"/></svg>myMainClass</h2>
          <div class="prop-body">
            <div class="cats">
              <span class="cap"></span>
              <button class="cur">UML</button><button>Comments</button><button>Profile</button><button>Style</button>
              <button class="foot" aria-label="More"><svg><use href="#vmenu"/></svg></button>
            </div>
            <form class="form">
              <label for="f-name">Name</label><input id="f-name" type="text" value="myMainClass">
              <label for="f-q">Qualified name</label><input id="f-q" type="text" value="myHelloWorldRootElement::myHelloWorldPackage::myMainClass" disabled>
              <div class="pair">
                <span class="lab">Is abstract</span><span class="opts"><label><input type="radio" name="abs">true</label><label><input type="radio" name="abs" checked>false</label></span>
                <span class="lab">Is active</span><span class="opts"><label><input type="radio" name="act">true</label><label><input type="radio" name="act" checked>false</label></span>
              </div>
              <label for="f-v">Visibility</label><span class="vis"><select id="f-v"><option>public</option></select><svg><use href="#arr"/></svg></span>
            </form>
            <div class="vscroll"><button class="up" aria-label="Scroll up"><svg><use href="#arr"/></svg></button><span class="thumb"></span><button class="down" aria-label="Scroll down"><svg><use href="#arr"/></svg></button></div>
          </div>
        </section>
      </div>
    </main>
    <footer class="status"><i class="grip"></i></footer>
  </div>
</div>
</body>
</html>
```
FILE: styles.css
```css
* { box-sizing: border-box; }
body { margin: 0; background: #7894bb; font: 12px/18px "Open Sans", "Noto Sans", sans-serif; color: #000; }
button, input, select { font: inherit; color: inherit; margin: 0; }
button { border: 0; padding: 0; background: none; }
ul { list-style: none; margin: 0; padding: 0; }
h1, h2 { margin: 0; font-size: 12px; font-weight: 400; }
svg { display: block; flex: none; }
i, b { flex: none; }
.defs { position: absolute; width: 0; height: 0; }
.ic { width: 16px; height: 16px; }
.sort-a { font: bold 10px "Open Sans", sans-serif; fill: #2a8378; }
.sort-z { font: bold 10px "Open Sans", sans-serif; fill: #a03c98; }

.window { height: 100vh; display: flex; flex-direction: column; border: 1px solid #4b4e55; border-radius: 8px 8px 0 0; background: #d6e4f1; padding: 0 7px 7px; overflow: hidden; }
.titlebar { height: 29px; margin: 0 -7px; padding: 5px 10px 0 11px; display: flex; align-items: center; gap: 2px; background: linear-gradient(#bdcadb, #d5e2ef); flex: none; }
.titlebar h1 { flex: 1; color: #444; }
.winctl { display: flex; gap: 3px; }
.winctl button { width: 30px; height: 17px; border: 1px solid #8795ab; border-radius: 2px; background: linear-gradient(#d2deea, #bccbdd); display: grid; place-items: center; }
.winctl svg { width: 14px; height: 12px; }

.client { flex: 1; min-height: 0; display: flex; flex-direction: column; background: #e0e5f6; }
.menubar { height: 19px; flex: none; display: flex; padding-left: 7px; gap: 12px; background: linear-gradient(#fff 0, #eef0f9 7px, #d5dbef 8px, #dfe4f5 18px); border-bottom: 1px solid #b6bac6; color: #6d6d6d; }
.menubar .with-ic { display: flex; align-items: center; gap: 4px; }
.toolbar { display: flex; align-items: center; height: 24px; flex: none; background: linear-gradient(#f8f9fe, #f1f3fb); }
.toolbar.second { height: 34px; padding-bottom: 4px; background: linear-gradient(#f1f3fb, #e0e5f6); }
.tb { width: 23px; height: 22px; display: grid; place-items: center; flex: none; }
.dd { width: 15px; height: 22px; display: grid; place-items: center; flex: none; fill: #222; }
.dd svg, .zoom svg, .vis svg, .pd svg, .more svg { width: 7px; height: 4px; }
.dd.off { fill: #6b6b6b; }
.grip { width: 5px; height: 16px; background: repeating-linear-gradient(#a8a294 0 2px, transparent 2px 4px) 1px 0 / 2px 16px no-repeat; }
.sep { width: 8px; height: 18px; border-left: 1px solid #8d8d8d; margin-left: 2px; margin-right: -2px; }
.grey { fill: #f4f4f4; stroke: #aaa; }
.green { fill: #d2f7a4; stroke: #0c9a2c; }
.letter { font: bold 16px/20px "Liberation Serif", serif; color: #2a548c; }
.ital { font-style: italic; }
.zoom { display: flex; align-items: center; width: 107px; height: 22px; margin: 0 1px; padding-right: 4px; background: #fff; border: 1px solid #c5c8d4; flex: none; }
.zoom select { flex: 1; min-width: 0; appearance: none; border: 0; background: none; padding: 0 0 0 3px; }
.persp { margin-left: auto; display: flex; align-items: center; }
.quick { width: 78px; height: 20px; border: 1px solid #d4d7e2; border-top-color: #abadb3; background: #fff; color: #555; padding: 0 1px; margin-right: 5px; }
.switcher { display: flex; align-items: center; height: 30px; margin-left: 1px; padding: 0 8px 0 4px; border-left: 1px solid #9fa3b0; border-top-left-radius: 4px; }
.pressed { border: 1px solid #55565c; border-radius: 3px; background: #d8dae2; height: 20px; }

.workbench { flex: 1; min-height: 0; display: grid; grid-template-columns: 350px minmax(0, 1fr); gap: 4px; padding: 0 3px; }
.side { display: grid; grid-template-rows: 178fr 392fr; gap: 4px; min-height: 0; }
.center { display: grid; grid-template-rows: 396fr 174fr; gap: 4px; min-height: 0; }
.view { min-width: 0; min-height: 0; background: #fff; border-radius: 9px 9px 8px 8px; border: 1px solid #fff; overflow: hidden; display: flex; flex-direction: column; position: relative; }
.tabs { display: flex; height: 25px; flex: none; background: #f3f5fc; }
.tab { display: flex; align-items: center; gap: 3px; padding: 0 4px 0 5px; background: linear-gradient(#e2ebf6, #fff); border-top-right-radius: 8px; white-space: nowrap; }
.tab .x { margin-left: 2px; }
.x svg { width: 11px; height: 11px; }
.tab.idle { background: none; color: #999; padding: 0 3px 0 4px; }
.tools { margin-left: auto; display: flex; align-items: center; }
.side .tools { margin-right: 6px; }
.ctl { display: flex; }
.ctl button { width: 22px; display: flex; justify-content: center; padding-top: 7px; }
.ctl .vm { width: 11px; height: 6px; }
.ctl .mi { width: 10px; height: 5px; }
.ctl .ma { width: 10px; height: 10px; margin-top: 1px; }
.ctl button:last-child { width: 24px; }
.side .ctl button:first-child { width: 20px; }
.side .ctl { padding-right: 7px; }
.tree { padding: 1px 0 0 7px; }
.tree li { display: flex; align-items: center; height: 18px; white-space: nowrap; }
.l1 { padding-left: 19px; }
.tree .l2 { padding-left: 55px; }
.tw { width: 9px; height: 9px; margin: 3px 4px 0 3px; }
.node { display: flex; align-items: center; gap: 4px; height: 18px; padding: 0 1px; margin-left: 1px; }
.sel { border: 1px solid #d9d9d9; border-radius: 3px; background: linear-gradient(#f8f8f8, #e6e6e6); padding-left: 0; margin-left: 0; }
.callout { position: absolute; fill: #ed1c24; }
.callout.left { width: 100px; height: 36px; left: 188px; top: 65px; }
.callout.right { width: 104px; height: 44px; left: -92px; top: 61px; }

.editor { border-color: #c5cad6; }
.editor .tabs { background: linear-gradient(#d8e4f1, #ccdbeb); border-bottom: 1px solid #b2c0d2; }
.editor .tab { background: #fff; height: 26px; padding-left: 4px; border-right: 1px solid #b2c0d2; }
.editor .ctl { margin-left: auto; }
.editor .ctl, .props .ctl { padding-right: 7px; }
.edit-body { flex: 1; min-height: 0; display: grid; grid-template: minmax(0, 1fr) 16px / minmax(0, 1fr) 18px 208px; margin: 1px 1px 0 2px; }
.canvas { position: relative; overflow: hidden; }
.uml { position: absolute; width: 126px; border: 1px solid #000; background: linear-gradient(#fff 0, #f6f9fb 20%, #e6edf0 48%, #d7e4e9 74%, #c3d7df 100%); }
.uml-name { height: 19px; display: flex; align-items: center; justify-content: center; gap: 2px; white-space: nowrap; }
.comp { height: 27px; border-top: 1px solid #000; }
.comp:nth-child(4) { height: 25px; }
.comp i { display: block; width: 7px; height: 7px; border: 1px solid #999; background: linear-gradient(#eee 2px, #000 2px 3px, #eee 3px); }
.hello { left: 96px; top: 26px; }
.hello .uml-name { justify-content: flex-start; gap: 0; }
.main { left: 96px; top: 184px; width: 128px; border-width: 2px; }
.h { position: absolute; width: 6px; height: 6px; background: #000; border: 1px solid #fff; border-width: 0 1px; }
.nw, .n, .ne { top: -4px; }
.w, .e { top: calc(50% - 3px); border-width: 1px 0; }
.sw, .s, .se { bottom: -4px; }
.nw, .w, .sw { left: -4px; }
.ne, .e, .se { right: -4px; }
.n, .s { left: calc(50% - 3px); }
.vbar { background: #f0f0f0; display: flex; flex-direction: column; justify-content: space-between; align-items: center; border-right: 2px solid #fff; fill: #8b8b8b; }
.vbar button, .hbar button { width: 16px; height: 16px; display: grid; place-items: center; }
.vbar svg, .hbar svg { width: 7px; height: 4px; }
.up svg { transform: rotate(180deg); }
.lt svg { transform: rotate(90deg); }
.rt svg { transform: rotate(-90deg); }
.hbar { grid-row: 2; grid-column: 1 / 3; background: #ededed; display: flex; justify-content: space-between; padding-right: 18px; fill: #7b7b7b; border-right: 2px solid #fff; }
.palette { grid-row: 1 / 3; grid-column: 3; border-left: 1px solid #999; display: flex; flex-direction: column; position: relative; min-height: 0; }
.pal-head { height: 25px; flex: none; display: flex; align-items: center; gap: 1px; padding: 0 7px 0 4px; background: linear-gradient(#fff, #f0f0f0); border-bottom: 1px solid #999; }
.pal-head span, .drawer h2 span { flex: 1; }
.tri { width: 10px; height: 14px; }
.pal-tools { height: 23px; flex: none; display: flex; align-items: center; padding: 0 0 2px 2px; background: #f0f0f0; }
.pal-tools button { width: 19px; height: 19px; display: grid; place-items: center; }
.pal-tools .pd { width: 11px; }
.pal-tools .on { background: #f8f8f8; border: 1px solid #999; border-width: 1px 0 0 1px; }
.drawer { flex: 1; min-height: 0; overflow: hidden; position: relative; border-top: 2px solid #aaa; }
.drawer h2 { display: flex; align-items: center; height: 20px; background: #f0f0f0; gap: 3px; padding: 0 3px 0 2px; }
.pn { width: 12px; height: 8px; }
.drawer ul { padding-top: 2px; }
.drawer li { display: flex; align-items: center; gap: 2px; height: 23px; padding-left: 17px; white-space: nowrap; }
.more { position: absolute; left: 65px; bottom: 0; width: 76px; height: 8px; background: rgba(160, 160, 160, .8); display: grid; place-items: center; fill: #555; }
.pages { height: 22px; flex: none; display: flex; background: #ccdbeb; border-top: 1px solid #8e949c; margin: 0 1px; }
.page { display: flex; align-items: center; gap: 3px; padding: 0 4px 0 5px; height: 19px; }
.current { background: #fff; border: 1px solid #8e949c; border-top: 0; padding: 0 4px 0 3px; height: 20px; }
.current .x { margin-left: 2px; }

.props .tools .tb { width: 24px; }
.props .tools { margin-right: 6px; }
.prop-title { height: 33px; flex: none; display: flex; align-items: center; gap: 4px; margin: 0 2px; padding: 4px 0 0 4px; font-size: 15px; font-weight: 700; color: #1d4a80; background: linear-gradient(#fff 4px, #dfe8f4); border-bottom: 1px solid #a9bfd6; }
.prop-body { flex: 1; min-height: 0; display: grid; grid-template-columns: 106px minmax(0, 1fr) 16px; margin: 0 1px 2px 1px; overflow: hidden; }
.cats { display: flex; flex-direction: column; min-height: 0; overflow: hidden; }
.cap { height: 10px; flex: none; background: #f0f0f0; border: 1px solid #999; border-width: 0 1px 1px 0; }
.cats button { height: 22px; flex: none; text-align: left; padding-left: 7px; background: linear-gradient(#d4d4d4, #bebebe); border: 1px solid #999; border-width: 1px 1px 0 0; box-shadow: inset 0 -1px #f4f4f4; }
.cats .cur { background: #fff; border: 0; font-weight: 700; box-shadow: none; }
.cats .foot { height: 14px; display: grid; place-items: center; background: linear-gradient(#ddd 4px, #999 4px 5px, #f2f2f2 5px); padding: 5px 0 0; box-shadow: none; }
.foot svg { width: 11px; height: 6px; }
.form { display: grid; grid-template-columns: 132px minmax(0, 1fr); grid-auto-rows: 31px; align-items: center; padding: 0 12px 0 10px; overflow: hidden; }
.form > input { height: 21px; border: 1px solid #dde2ea; border-top-color: #abadb3; border-radius: 2px; background: #fff; padding: 0 5px; }
.form > input:disabled { background: #f0f0f0; border-color: #b0b0b0; color: #6d6d6d; }
.pair { grid-column: 1 / 3; display: grid; grid-template-columns: 132px minmax(0, 1fr) 132px 242px; align-items: center; height: 26px; align-self: start; }
.opts, .opts label { display: flex; align-items: center; gap: 4px; }
.opts { gap: 15px; }
.opts input { appearance: none; width: 12px; height: 12px; border: 1px solid #858585; border-radius: 50%; background: radial-gradient(#dcdcdc, #fff); }
.opts input:checked { background: radial-gradient(circle, #8ee0ff 0 1px, #14608e 2px, #0b3556 3px, #f4f4f4 4px); }
.vis { display: flex; align-items: center; height: 20px; margin-right: 5px; border: 1px solid #abadb3; border-bottom: 0; padding-right: 5px; align-self: start; background: linear-gradient(#f0f0f0, #e8e8e8) right / 17px 100% no-repeat; }
.form > label[for="f-v"] { align-self: start; padding-top: 2px; }
.vis select { flex: 1; appearance: none; border: 0; background: none; padding: 0 0 0 4px; }
.vscroll { display: flex; flex-direction: column; background: #f0f0f0; }
.vscroll button { height: 18px; display: grid; place-items: center; }
.vscroll svg { width: 7px; height: 4px; }
.thumb { height: 22px; border: 1px solid #8e8e8e; border-radius: 2px; background: repeating-linear-gradient(#555 0 1px, transparent 1px 3px) center / 7px 7px no-repeat, linear-gradient(90deg, #fafafa, #c8c8c8); }
.down { margin-top: auto; }
.status { height: 29px; flex: none; display: flex; align-items: center; padding-left: 984px; }
```
